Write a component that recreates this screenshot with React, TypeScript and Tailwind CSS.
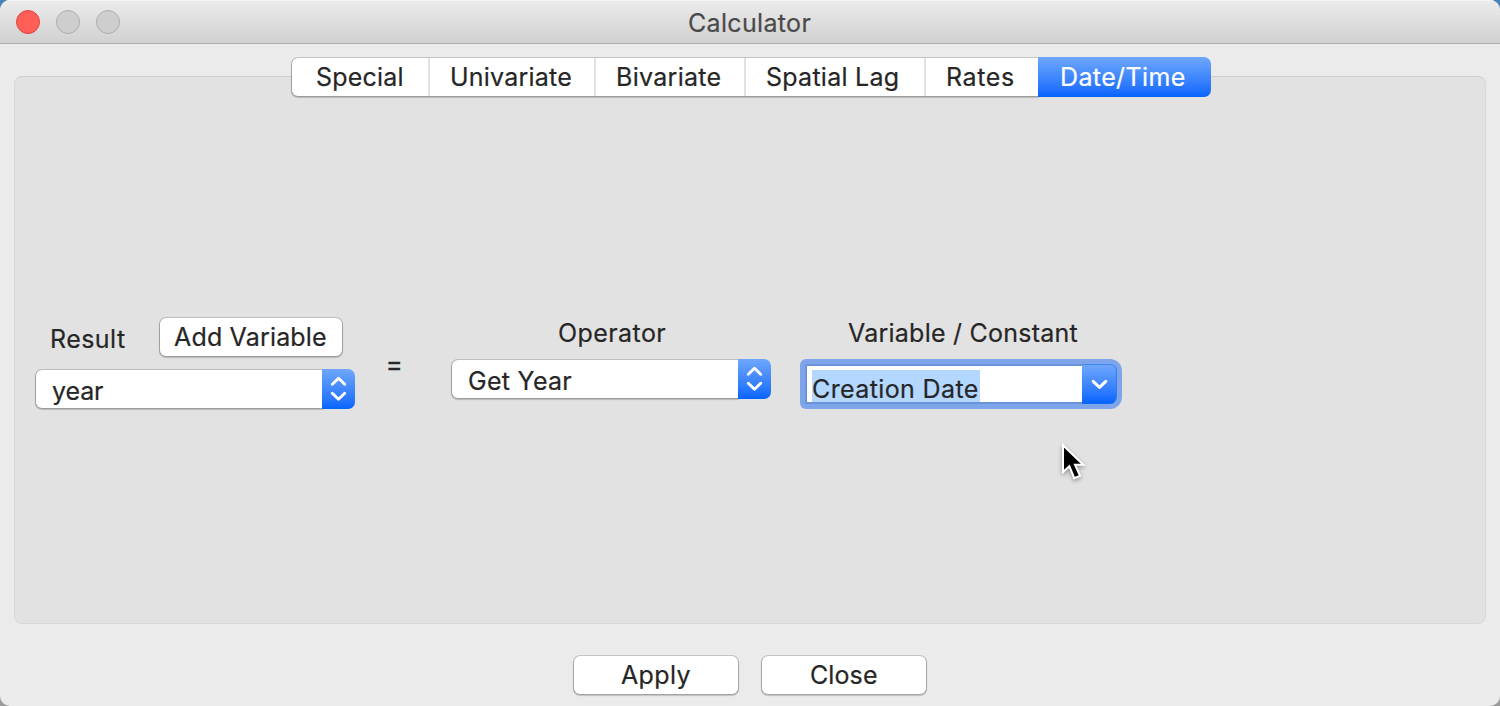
import type { ReactNode } from "react";

const tabs = [
  { label: "Special", cls: "w-[138px] border-r-2 pl-[24px] tracking-[0.2px]" },
  { label: "Univariate", cls: "w-[166px] border-r-2 pl-[20px] tracking-[0.22px]" },
  { label: "Bivariate", cls: "w-[150px] border-r-2 pl-[20px] tracking-[0.3px]" },
  { label: "Spatial Lag", cls: "w-[180px] border-r-2 pl-[20px] tracking-[0.26px]" },
  { label: "Rates", cls: "w-[112px] pl-[20px] tracking-[0.6px]" },
];

const raised =
  "bg-white shadow-[0_0_0_1px_rgba(0,0,0,0.15),0_1px_1px_1px_rgba(0,0,0,0.18)]";

function Button({ children, cls }: { children: ReactNode; cls: string }) {
  return (
    <button
      className={`block h-[38px] rounded-[6px] text-left leading-[38px] whitespace-nowrap ${raised} ${cls}`}
    >
      {children}
    </button>
  );
}

function Popup({ value, cls }: { value: string; cls: string }) {
  return (
    <div className="flex h-10 w-[320px]">
      <div
        className={`my-px ml-px h-[38px] w-[286px] rounded-l-[6px] leading-[42px] whitespace-nowrap ${raised} ${cls}`}
      >
        {value}
      </div>
      <div className="relative h-10 w-[33px] rounded-r-[7px] bg-linear-to-b from-[#6ea7fb] to-[#0364fe]">
        <svg className="block" width="33" height="40" viewBox="0 0 33 40" fill="none">
          <path
            d="M10.3 15.3 16.5 9.3l6.2 6M10.3 24.2l6.2 6 6.2-6"
            stroke="white"
            strokeWidth="2.9"
            strokeLinecap="round"
            strokeLinejoin="round"
          />
        </svg>
      </div>
    </div>
  );
}

export default function App() {
  return (
    <div className="h-[706px] w-[1500px] overflow-hidden bg-[linear-gradient(#4a81b8_50%,#9a9a9a_50%)] font-['Inter',sans-serif] text-[25px] text-[#262626] [-webkit-text-stroke:0.2px]">
      <div className="relative flex h-[706px] flex-col overflow-hidden rounded-[10px] bg-[#ebebeb]">
        <header className="flex h-11 shrink-0 items-start border-b border-[#b0b0b0] bg-linear-to-b from-[#ececec] to-[#d1d1d1] shadow-[inset_0_1px_0_#f6f6f6]">
          <div className="flex w-[688px] gap-4 pt-[10px] pl-4">
            <span className="size-6 rounded-full border border-[#e2443e] bg-[#ff5f57]" />
            <span className="size-6 rounded-full border border-[#adadad] bg-[#cecece]" />
            <span className="size-6 rounded-full border border-[#adadad] bg-[#cecece]" />
          </div>
          <h1 className="leading-[46px] tracking-[0.33px] text-[#4a4a4a]">Calculator</h1>
        </header>

        <nav className="z-10 mt-[13px] ml-[291px] flex h-10 shrink-0">
          <div className={`my-px ml-px flex h-[38px] w-[746px] rounded-l-[6px] ${raised}`}>
            {tabs.map((t) => (
              <div
                key={t.label}
                className={`h-[38px] shrink-0 border-[#e2e2e2] leading-[38px] whitespace-nowrap ${t.cls}`}
              >
                {t.label}
              </div>
            ))}
          </div>
          <div className="h-10 w-[173px] rounded-r-[7px] bg-linear-to-b from-[#6ea7fb] to-[#0364fe] pl-[22px] leading-10 tracking-[0.38px] whitespace-nowrap text-white">
            Date/Time
          </div>
        </nav>

        <main className="mx-[14px] -mt-[21px] h-[548px] shrink-0 rounded-[8px] border border-[#d8d8d8] border-t-[#cecece] bg-[#e2e2e2]">
          <div className="flex items-start pt-[240px] pl-[20px]">
            <div className="w-[320px]">
              <div className="flex h-[52px] pt-px">
                <span className="w-[125px] pl-[15px] leading-[43px] tracking-[0.45px]">Result</span>
                <Button cls="w-[182px] pl-[14px] tracking-[0.17px]">Add Variable</Button>
              </div>
              <Popup value="year" cls="pl-[16px] tracking-[-0.1px]" />
            </div>
            <span className="w-[96px] pt-[27px] pl-[31px] leading-10 [-webkit-text-stroke:0.6px]">=</span>
            <div className="w-[320px]">
              <div className="h-[42px] pl-[107px] leading-[32px] tracking-[0.42px]">Operator</div>
              <Popup value="Get Year" cls="pl-[16px] tracking-[0.28px]" />
            </div>
            <div className="ml-[29px] w-[322px]">
              <div className="h-[42px] pl-[48px] leading-[32px] tracking-[0.24px] whitespace-nowrap">
                Variable / Constant
              </div>
              <div className="flex h-[50px] w-[322px] rounded-l-[6px] rounded-r-[12px] bg-[#7ea5e9] py-[5px] pl-[5px]">
                <div className="h-10 w-[277px] border-2 border-r-0 border-[#6a93da] bg-white pt-[4px] pl-[5px]">
                  <div className="h-[32px] w-[168px] bg-[#b3d7ff] leading-[38px] tracking-[0.38px] whitespace-nowrap">
                    Creation Date
                  </div>
                </div>
                <div className="h-10 w-[35px] rounded-r-[7px] border border-l-0 border-t-[#4086f6] border-r-[#327cf2] border-b-[#1267f4] bg-linear-to-b from-[#6ea7fb] to-[#0364fe]">
                  <svg className="block" width="34" height="38" viewBox="0 0 34 38" fill="none">
                    <path
                      d="M11.2 16.3l6.3 6 6.3-6"
                      stroke="white"
                      strokeWidth="3"
                      strokeLinecap="round"
                      strokeLinejoin="round"
                    />
                  </svg>
                </div>
              </div>
            </div>
          </div>
        </main>

        <footer className="mt-8 ml-[574px] flex gap-6">
          <Button cls="w-[164px] pl-[47px] tracking-[0.35px]">Apply</Button>
          <Button cls="w-[164px] pl-[48px] tracking-[0.1px]">Close</Button>
        </footer>

        <svg
          className="absolute top-[441px] left-[1059px] drop-shadow-[0_2px_2px_rgba(0,0,0,0.35)]"
          width="30"
          height="42"
          viewBox="0 0 30 42"
        >
          <path
            d="M4 4.2V31L10.4 25.2L15.2 37.2L21 34.8L16 23.8H24.3Z"
            fill="black"
            stroke="white"
            strokeWidth="2"
          />
        </svg>
      </div>
    </div>
  );
}
